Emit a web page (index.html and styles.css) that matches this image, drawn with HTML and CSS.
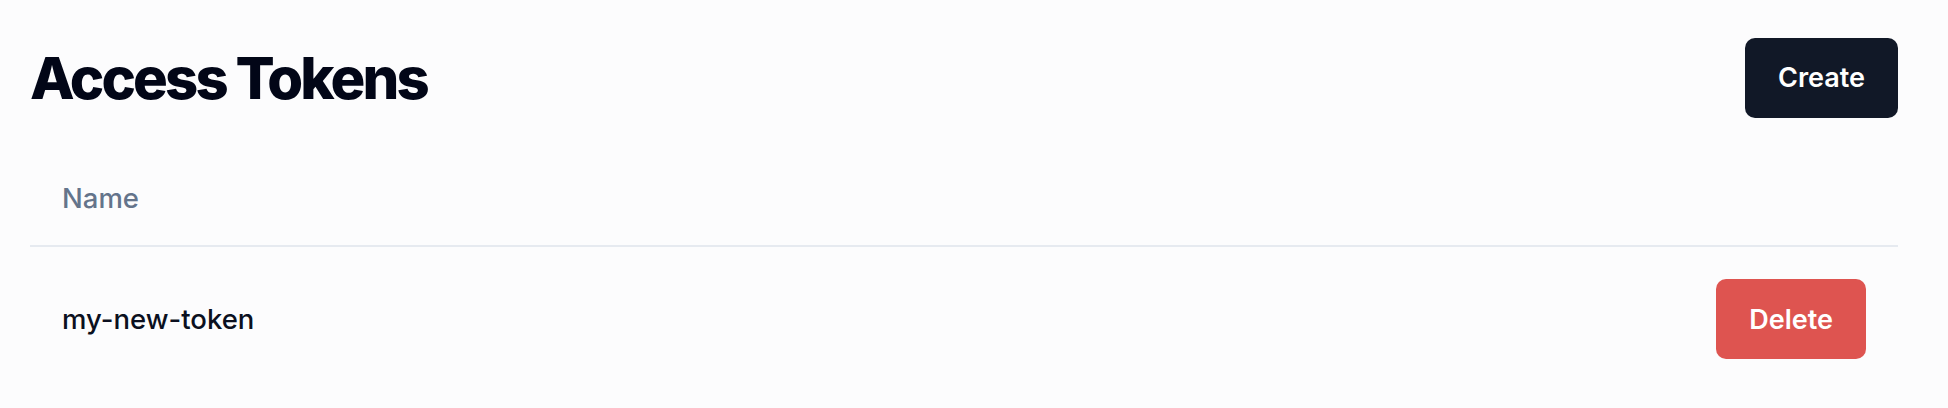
FILE: index.html
```html
<!DOCTYPE html>
<html lang="en">
<head>
<meta charset="utf-8">
<title>Access Tokens</title>
<link rel="stylesheet" href="styles.css">
</head>
<body>
<main class="page">
  <header class="page-header">
    <h1 class="title">Access Tokens</h1>
    <button class="btn btn-dark" type="button">Create</button>
  </header>
  <table class="tokens">
    <thead>
      <tr>
        <th class="col-name">Name</th>
        <th class="col-actions"></th>
      </tr>
    </thead>
    <tbody>
      <tr>
        <td class="col-name">my-new-token</td>
        <td class="col-actions"><button class="btn btn-danger" type="button">Delete</button></td>
      </tr>
    </tbody>
  </table>
</main>
</body>
</html>
```
FILE: styles.css
```css
* { box-sizing: border-box; }
html, body {
  margin: 0;
  background: #fcfcfd;
  font-family: Inter, "Noto Sans", "Liberation Sans", sans-serif;
}
.page {
  padding: 37px 50px 16px 30px;
}
.page-header {
  display: flex;
  align-items: center;
  justify-content: space-between;
  height: 81px;
}
.title {
  margin: 0;
  font-size: 58px;
  font-weight: 800;
  line-height: 1;
  letter-spacing: -0.05em;
  color: #020617;
}
.btn {
  height: 80px;
  padding: 0 33px;
  border: none;
  border-radius: 10px;
  font-family: inherit;
  font-size: 27px;
  font-weight: 600;
  color: #ffffff;
  cursor: pointer;
}
.btn-dark { background: #111827; }
.btn-danger { background: #de5450; }
.tokens {
  width: 100%;
  margin-top: 32px;
  border-collapse: collapse;
}
.tokens th {
  height: 96px;
  padding: 0 32px;
  text-align: left;
  font-size: 27.5px;
  font-weight: 500;
  color: #64748b;
  border-bottom: 2px solid #e6eaf0;
}
.tokens td {
  padding: 32px 32px 33px;
  font-size: 27.5px;
  font-weight: 500;
  color: #0b1020;
}
.tokens .col-actions { text-align: right; }
```
